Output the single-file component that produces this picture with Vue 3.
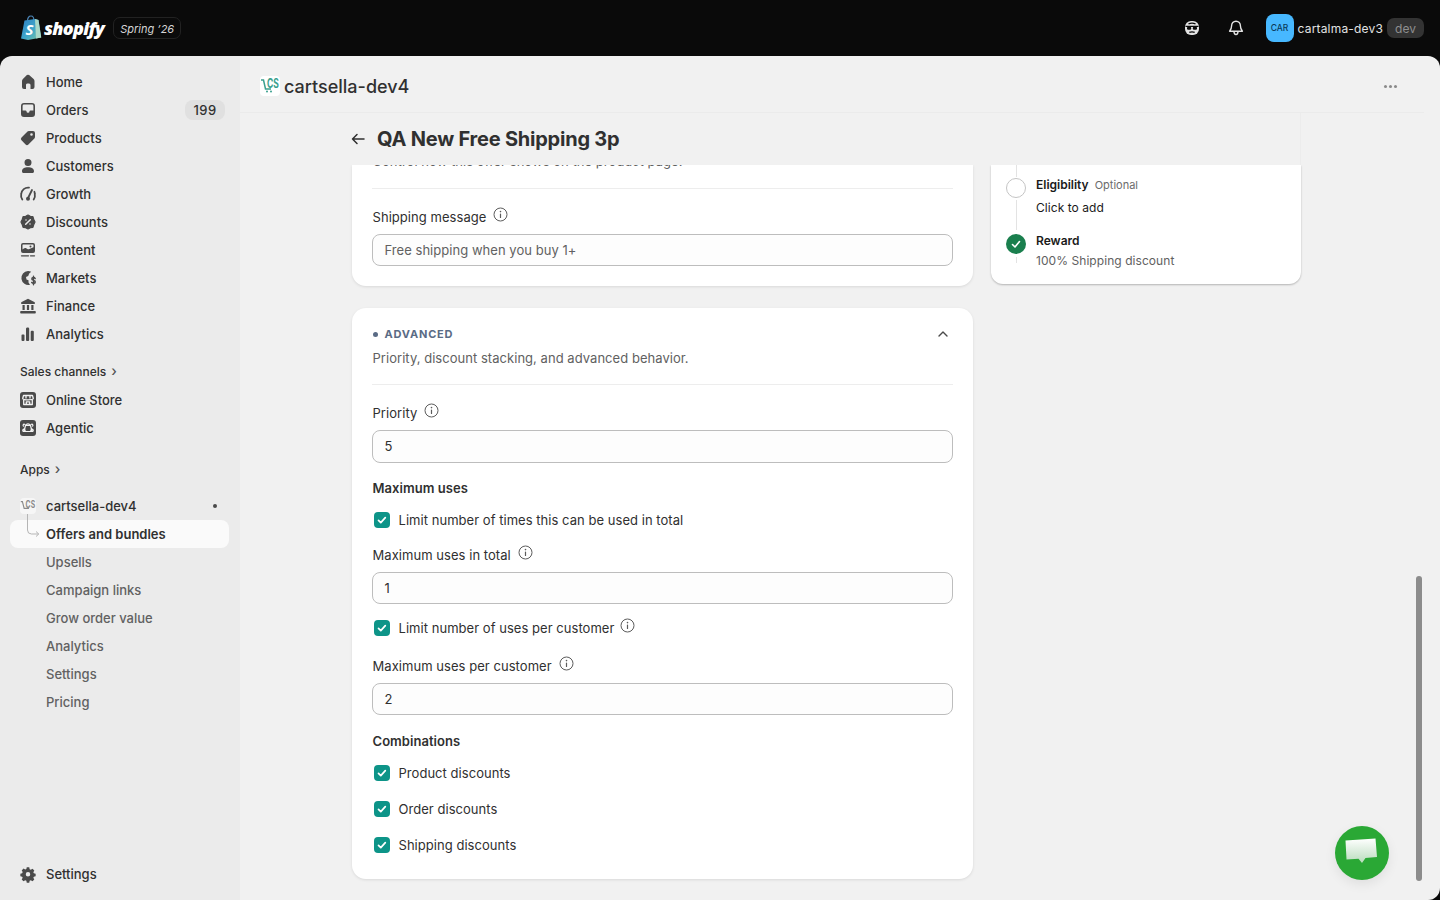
<template>
  <div class="shell">
    <!-- top bar -->
    <header class="topbar">
      <div class="brand">
        <svg class="bag" width="22" height="26" viewBox="0 0 22 26">
          <defs>
            <linearGradient id="bagfill" x1="0" y1="0" x2="1" y2="1">
              <stop offset="0" stop-color="#2f7fc4" />
              <stop offset="0.55" stop-color="#3fa7c9" />
              <stop offset="1" stop-color="#86c9a0" />
            </linearGradient>
          </defs>
          <path d="M7.5 6c0-3 1.5-5 3.5-5s3 2 3 5" fill="none" stroke="#4d86b8" stroke-width="1.2" />
          <path d="M4.5 5.6 15 4l3.5 1 2.7 17.5L8 25 1 23.4z" fill="url(#bagfill)" />
          <path d="M15 4l3.5 1 2.7 17.5-5.2 1.1z" fill="#a9d8c8" />
          <text x="5.5" y="20" class="bag-s">S</text>
        </svg>
        <span class="wordmark">shopify</span>
        <span class="season">Spring ’26</span>
      </div>
      <div class="top-actions">
        <svg class="top-icon" width="20" height="20" viewBox="0 0 20 20">
          <rect x="3" y="3" width="14" height="14" rx="6" fill="#e3e3e3" />
          <path d="M3.500 8.300h13M6.500 5.900c2.300-1 4.700-1 7 0" stroke="#0a0a0a" stroke-width="1.200" fill="none" />
          <rect x="5" y="8.800" width="4.200" height="3" rx="1.200" fill="#0a0a0a" />
          <rect x="10.800" y="8.800" width="4.200" height="3" rx="1.200" fill="#0a0a0a" />
          <path d="M7.300 14.400c1.800-.8 3.600-.8 5.400 0" stroke="#0a0a0a" stroke-width="1.200" fill="none" />
        </svg>
        <svg class="top-icon bell" width="20" height="20" viewBox="0 0 20 20" fill="none" stroke="#e3e3e3" stroke-width="1.4" stroke-linejoin="round">
          <path d="M10 3.2c-2.7 0-4.400 2-4.400 4.500 0 2.600-.5 3.700-2 5.500h12.800c-1.500-1.800-2-2.900-2-5.500 0-2.500-1.700-4.500-4.400-4.500z" />
          <path d="M8 13.500c0 2 .8 3 2 3s2-1 2-3" />
        </svg>
        <div class="store">
          <span class="avatar">CAR</span>
          <span class="store-name">cartalma-dev3</span>
          <span class="dev-pill">dev</span>
        </div>
      </div>
    </header>

    <div class="body">
      <!-- sidebar -->
      <aside class="sidebar">
        <nav class="nav-group">
          <a v-for="item in mainNav" :key="item.label" class="nav-row">
            <svg class="nav-icon" width="20" height="20" viewBox="0 0 20 20">
              <path v-for="(p, i) in icons[item.icon]" :key="i" v-bind="p" />
            </svg>
            <span class="nav-label">{{ item.label }}</span>
            <span v-if="item.badge" class="nav-badge">{{ item.badge }}</span>
          </a>
        </nav>

        <div class="nav-heading first">Sales channels <span class="chev">›</span></div>
        <nav class="nav-group">
          <a v-for="item in channels" :key="item.label" class="nav-row">
            <svg class="nav-icon" width="20" height="20" viewBox="0 0 20 20">
              <path v-for="(p, i) in icons[item.icon]" :key="i" v-bind="p" />
            </svg>
            <span class="nav-label">{{ item.label }}</span>
          </a>
        </nav>

        <div class="nav-heading second">Apps <span class="chev">›</span></div>
        <nav class="nav-group apps">
          <a class="nav-row">
            <span class="mini-app">
              <svg width="16" height="16" viewBox="0 0 20 20" fill="none" stroke="#8a8a8a" stroke-width="1.4">
                <path d="M1 4.500h2l2.200 8.500h6" />
                <text transform="translate(7 12.500) scale(.85 1.25)" class="mini-cs">CS</text>
              </svg>
            </span>
            <span class="nav-label">cartsella-dev4</span>
            <span class="pin-dot"></span>
          </a>
          <a class="nav-row active">
            <svg class="elbow" width="16" height="26" viewBox="0 0 16 26" fill="none" stroke="#b5b5b5" stroke-width="1">
              <path d="M1.500 0v16a4 4 0 0 0 4 4h7M10 17.500l2.800 2.500-2.800 2.500" />
            </svg>
            <span class="nav-label">Offers and bundles</span>
          </a>
          <a v-for="label in appLinks" :key="label" class="nav-row sub">
            <span class="nav-label">{{ label }}</span>
          </a>
        </nav>

        <a class="nav-row settings">
          <svg class="nav-icon" width="20" height="20" viewBox="0 0 20 20">
            <path v-for="(p, i) in icons.gear" :key="i" v-bind="p" />
          </svg>
          <span class="nav-label">Settings</span>
        </a>
      </aside>

      <!-- main area -->
      <main class="main">
        <div class="app-header">
          <span class="app-logo">
            <svg width="20" height="20" viewBox="0 0 20 20" fill="none" stroke="#3aa08e" stroke-width="1.500">
              <path d="M1 4h2.500l2 9h5.500" />
              <circle cx="7" cy="15.500" r="1" fill="#3aa08e" stroke="none" />
              <circle cx="11" cy="15.500" r="1" fill="#3aa08e" stroke="none" />
              <text transform="translate(7 12) scale(.85 1.25)" class="logo-cs">CS</text>
            </svg>
          </span>
          <span class="app-title">cartsella-dev4</span>
          <span class="dots"><i></i><i></i><i></i></span>
        </div>

        <div class="page-head">
          <svg width="16" height="16" viewBox="0 0 16 16" fill="none" stroke="#303030" stroke-width="1.500" stroke-linecap="round" stroke-linejoin="round">
            <path d="M14 8H2.500M7 3.500 2.500 8 7 12.500" />
          </svg>
          <h1 class="page-title">QA New Free Shipping 3p</h1>
        </div>

        <div class="content">
          <div class="col-main">
            <section class="card clipped">
              <p class="section-desc hint">Control how this offer shows on the product page.</p>
              <div class="divider top-one"></div>
              <label class="field-label">Shipping message <InfoMark /></label>
              <div class="input placeholder">Free shipping when you buy 1+</div>
            </section>

            <section class="card advanced">
              <div class="section-head">
                <span class="eyebrow"><i class="eyebrow-dot"></i>ADVANCED</span>
                <svg width="12" height="12" viewBox="0 0 12 12" fill="none" stroke="#4a4a4a" stroke-width="1.400" stroke-linecap="round" stroke-linejoin="round">
                  <path d="M2 8l4-4 4 4" />
                </svg>
              </div>
              <p class="section-desc">Priority, discount stacking, and advanced behavior.</p>
              <div class="divider"></div>

              <label class="field-label">Priority <InfoMark /></label>
              <div class="input tall">5</div>

              <h3 class="group-title">Maximum uses</h3>
              <div class="check-row first-check">
                <CheckBox />
                <span>Limit number of times this can be used in total</span>
              </div>
              <label class="field-label after-check">Maximum uses in total <InfoMark /></label>
              <div class="input">1</div>
              <div class="check-row after-input">
                <CheckBox />
                <span>Limit number of uses per customer</span>
                <InfoMark />
              </div>
              <label class="field-label after-check two">Maximum uses per customer <InfoMark /></label>
              <div class="input">2</div>

              <h3 class="group-title combos">Combinations</h3>
              <div v-for="label in combos" :key="label" class="check-row combo">
                <CheckBox />
                <span>{{ label }}</span>
              </div>
            </section>
          </div>

          <div class="col-side">
            <section class="summary">
              <div class="step eligibility">
                <span class="step-mark open"></span>
                <div>
                  <div class="step-title">Eligibility <span class="optional">Optional</span></div>
                  <div class="step-text dark">Click to add</div>
                </div>
              </div>
              <div class="step reward">
                <span class="step-mark done">
                  <svg width="12" height="12" viewBox="0 0 12 12" fill="none" stroke="#fff" stroke-width="1.600" stroke-linecap="round" stroke-linejoin="round">
                    <path d="M2.500 6.500l2.500 2.500 4.500-5.500" />
                  </svg>
                </span>
                <div>
                  <div class="step-title">Reward</div>
                  <div class="step-text">100% Shipping discount</div>
                </div>
              </div>
            </section>
          </div>
        </div>

        <div class="scroll-thumb"></div>
        <button class="chat">
          <svg width="46" height="36" viewBox="0 0 46 36">
            <defs>
              <linearGradient id="chatfill" x1="0" y1="0" x2="0" y2="1">
                <stop offset="0" stop-color="#ffffff" />
                <stop offset="1" stop-color="#b9dcbc" />
              </linearGradient>
            </defs>
            <path d="M6.500 5.500 36.500 3.500 38 22 26.500 23 23 28 19.500 23.700 7.500 24.500z" fill="url(#chatfill)" />
          </svg>
        </button>
      </main>
    </div>
  </div>
</template>

<script setup>
import { h } from "vue";

const InfoMark = () =>
  h("svg", { class: "info", width: 15, height: 15, viewBox: "0 0 15 15", fill: "none", stroke: "#5c5c5c", "stroke-width": 1 }, [
    h("circle", { cx: 7.5, cy: 7.5, r: 6.5 }),
    h("path", { d: "M7.500 7v3.500", "stroke-width": 1.2, "stroke-linecap": "round" }),
    h("circle", { cx: 7.5, cy: 4.6, r: 0.8, fill: "#5c5c5c", stroke: "none" }),
  ]);

const CheckBox = () =>
  h("span", { class: "box" }, [
    h("svg", { width: 16, height: 16, viewBox: "0 0 16 16", fill: "none", stroke: "#fff", "stroke-width": 1.7, "stroke-linecap": "round", "stroke-linejoin": "round" }, [
      h("path", { d: "M4.500 8.300l2.300 2.300 4.500-5" }),
    ]),
  ]);

const ink = "#4a4a4a";
const icons = {
  home: [{ fill: ink, d: "M8.900 3.100a1.700 1.700 0 0 1 2.200 0l4.500 3.800c.6.500.9 1.200.9 2V15a2 2 0 0 1-2 2h-2v-4a1.500 1.500 0 0 0-1.500-1.500h-1A1.500 1.500 0 0 0 8 13v4H6a2 2 0 0 1-2-2V8.900c0-.8.300-1.500.9-2z" }],
  orders: [{ fill: ink, "fill-rule": "evenodd", d: "M6 3h8a3 3 0 0 1 3 3v8a3 3 0 0 1-3 3H6a3 3 0 0 1-3-3V6a3 3 0 0 1 3-3zM4.600 10.500V6A1.400 1.400 0 0 1 6 4.600h8A1.400 1.400 0 0 1 15.400 6v4.500h-2.900a1 1 0 0 0-1 .8 1.500 1.500 0 0 1-3 0 1 1 0 0 0-1-.8z" }],
  tag: [{ fill: ink, "fill-rule": "evenodd", d: "M3.500 9.500l6-6A2 2 0 0 1 10.900 3H15a2 2 0 0 1 2 2v4.100a2 2 0 0 1-.6 1.400l-6 6a2 2 0 0 1-2.800 0l-4.100-4.200a2 2 0 0 1 0-2.800zM13.500 5.200a1.300 1.300 0 1 0 0 2.600 1.300 1.300 0 0 0 0-2.600z" }],
  person: [{ fill: ink, d: "M10 3a3.500 3.500 0 1 1 0 7 3.500 3.500 0 0 1 0-7zM4 15.200c0-2.400 2.500-3.900 6-3.900s6 1.500 6 3.900c0 1-.7 1.800-1.500 1.800h-9C4.700 17 4 16.200 4 15.200z" }],
  growth: [
    { fill: "none", stroke: ink, "stroke-width": 1.8, "stroke-linecap": "round", d: "M4.300 15.500A7 7 0 0 1 3.200 10 7 7 0 0 1 11 3.600M15.700 15.500A7 7 0 0 0 16.800 10c0-.8-.1-1.500-.4-2.200" },
    { fill: "none", stroke: ink, "stroke-width": 1.800, "stroke-linecap": "round", d: "M9.800 14.500 14 6" },
    { fill: ink, d: "M10 12.800a2 2 0 1 1 0 4 2 2 0 0 1 0-4z" },
  ],
  discount: [
    { fill: ink, stroke: ink, "stroke-width": 1.2, "stroke-linejoin": "round", d: "M10 3l2.300 1.300 2.600.3.800 2.600L17 10l-1.300 2.800-.8 2.600-2.600.3L10 17l-2.300-1.300-2.600-.3-.8-2.600L3 10l1.300-2.800.8-2.600 2.600-.3z" },
    { fill: "none", stroke: "#ebebeb", "stroke-width": 1.500, "stroke-linecap": "round", d: "M12.300 7.700l-4.600 4.600M8 8h.01M12 12h.01" },
  ],
  content: [
    { fill: ink, "fill-rule": "evenodd", d: "M5 3h10a2 2 0 0 1 2 2v6a2 2 0 0 1-2 2H5a2 2 0 0 1-2-2V5a2 2 0 0 1 2-2zM4.500 9.500c1.300-1.500 2.600-2 3.800-1.200 1 .7 1.500 1.200 2.500 1l4.700-2V5a.5.5 0 0 0-.5-.5H5a.5.5 0 0 0-.5.5z" },
    { fill: ink, d: "M12.500 5.500a1 1 0 1 1 0 2 1 1 0 0 1 0-2z" },
    { fill: "none", stroke: ink, "stroke-width": 1.300, "stroke-linecap": "round", d: "M3.500 15.800h7M12.500 15.800h4" },
  ],
  markets: [
    { fill: ink, "fill-rule": "evenodd", d: "M10 3a7 7 0 0 1 3.200.8l-2 1.800-1 2.400-2.200 1 .5 2.500 2 .8v2.200l1.500 2.300A7 7 0 1 1 10 3z" },
    { fill: "none", stroke: ink, "stroke-width": 1.400, "stroke-linecap": "round", d: "M17.200 10.500c-.4-.8-1-1-1.700-1-1 0-1.700.5-1.700 1.400 0 2 3.500 1 3.500 3 0 1-.8 1.500-1.800 1.500-.8 0-1.400-.3-1.800-1M15.500 8.200v8.500" },
  ],
  finance: [
    { fill: ink, d: "M10 2.800l6.800 3.400v1.800H3.200V6.200zM3 15h14a.8.8 0 0 1 .8.800v.9a.8.8 0 0 1-.8.800H3a.8.8 0 0 1-.8-.8v-.9A.8.8 0 0 1 3 15zM4.500 9h2.200v5H4.500zM8.900 9h2.200v5H8.900zM13.300 9h2.200v5h-2.200z" },
  ],
  analytics: [
    { fill: ink, d: "M4.300 10.500h1.400a.8.8 0 0 1 .8.800V16a1 1 0 0 1-1 1h-1a1 1 0 0 1-1-1v-4.700a.8.8 0 0 1 .8-.8zM9 3.500h1a1.200 1.200 0 0 1 1.200 1.200V16a1 1 0 0 1-1 1H9a1 1 0 0 1-1-1V4.700A1.200 1.200 0 0 1 9 3.500zM13.700 6.800h1.100a1 1 0 0 1 1 1V16a1 1 0 0 1-1 1h-1.100a1 1 0 0 1-1-1V7.800a1 1 0 0 1 1-1z" },
  ],
  store: [
    { fill: ink, d: "M5 2h10a3 3 0 0 1 3 3v10a3 3 0 0 1-3 3H5a3 3 0 0 1-3-3V5a3 3 0 0 1 3-3z" },
    { fill: "none", stroke: "#f2f2f2", "stroke-width": 1.300, "stroke-linejoin": "round", d: "M5.500 5.500h9l.8 3c0 1-3 1.300-5.300 1.300s-5.300-.3-5.300-1.300zM5.700 10v4.500h8.600V10M8.300 14.500v-2.700h3.400v2.700M8 5.500v3M12 5.500v3" },
  ],
  agentic: [
    { fill: ink, d: "M5 2h10a3 3 0 0 1 3 3v10a3 3 0 0 1-3 3H5a3 3 0 0 1-3-3V5a3 3 0 0 1 3-3z" },
    { fill: "none", stroke: "#f2f2f2", "stroke-width": 1.200, "stroke-linejoin": "round", d: "M7.500 7.500h5l1.500 6H6zM8.300 7.500a1.700 1.700 0 1 1 3.400 0M6 13.500a1.200 1.200 0 1 0-.1 0M14 13.500a1.200 1.200 0 1 1 .1 0M7.500 7.500a1.200 1.200 0 1 0-1.700 1M12.500 7.500a1.200 1.200 0 1 1 1.700 1" },
  ],
  gear: [
    { fill: ink, "fill-rule": "evenodd", d: "M8.600 2.500h2.800l.4 2.100 1.300.6 1.900-1.100 2 2-1.100 1.900.6 1.300 2 .4v2.800l-2 .5-.6 1.300 1.100 1.800-2 2-1.900-1.100-1.300.6-.4 2H8.600l-.4-2-1.300-.6-1.900 1.100-2-2 1.100-1.800-.6-1.300-2-.5V9.600l2-.4.6-1.300L3 6l2-2 1.900 1.100 1.300-.6zM10 7.700a2.500 2.500 0 1 0 0 5 2.500 2.500 0 0 0 0-5z", transform: "translate(1 1) scale(.9)" },
  ],
};

const mainNav = [
  { label: "Home", icon: "home" },
  { label: "Orders", icon: "orders", badge: "199" },
  { label: "Products", icon: "tag" },
  { label: "Customers", icon: "person" },
  { label: "Growth", icon: "growth" },
  { label: "Discounts", icon: "discount" },
  { label: "Content", icon: "content" },
  { label: "Markets", icon: "markets" },
  { label: "Finance", icon: "finance" },
  { label: "Analytics", icon: "analytics" },
];

const channels = [
  { label: "Online Store", icon: "store" },
  { label: "Agentic", icon: "agentic" },
];

const appLinks = ["Upsells", "Campaign links", "Grow order value", "Analytics", "Settings", "Pricing"];
const combos = ["Product discounts", "Order discounts", "Shipping discounts"];
</script>

<style>
html,
body {
  margin: 0;
  height: 100%;
  background: #0a0a0a;
  overflow: hidden;
}
.info {
  flex: none;
  position: relative;
  top: -3px;
}
.check-row .info {
  top: -3px;
  margin-left: 6px;
}
.box {
  width: 16px;
  height: 16px;
  flex: none;
  border-radius: 4px;
  background: #0d9488;
  display: flex;
}
</style>

<style scoped>
.shell {
  width: 1440px;
  height: 900px;
  display: flex;
  flex-direction: column;
  font-family: Inter, "Liberation Sans", sans-serif;
  color: #303030;
  background: #0a0a0a;
}

/* top bar */
.topbar {
  height: 56px;
  flex: none;
  display: flex;
  align-items: center;
  justify-content: space-between;
  padding: 0 16px 0 20px;
}
.brand {
  display: flex;
  align-items: center;
}
.bag-s {
  font: italic 700 15px "Open Sans", sans-serif;
  fill: #fff;
}
.wordmark {
  margin-left: 2px;
  font: italic 800 18px "Open Sans", sans-serif;
  letter-spacing: -0.7px;
  color: #fff;
}
.season {
  margin-left: 9px;
  height: 19px;
  padding: 1px 6px 0;
  box-sizing: content-box;
  display: flex;
  align-items: center;
  border: 1px solid #222;
  border-radius: 7px;
  font-size: 11px;
  font-style: italic;
  color: #d4d4d4;
}
.top-actions {
  display: flex;
  align-items: center;
}
.bell {
  margin-left: 24px;
}
.store {
  margin-left: 20px;
  display: flex;
  align-items: center;
}
.avatar {
  width: 28px;
  height: 28px;
  border-radius: 8px;
  background: #47b8ff;
  color: #0b3a5a;
  font-size: 8.500px;
  font-weight: 500;
  display: flex;
  align-items: center;
  justify-content: center;
}
.store-name {
  margin-left: 4px;
  font-size: 12px;
  letter-spacing: 0.18px;
  color: #e3e3e3;
}
.dev-pill {
  margin-left: 4px;
  height: 20px;
  width: 37px;
  display: flex;
  align-items: center;
  justify-content: center;
  border-radius: 7px;
  background: #333;
  color: #8f8f8f;
  font-size: 12px;
}

/* sidebar */
.body {
  flex: 1;
  display: flex;
  min-height: 0;
}
.sidebar {
  width: 240px;
  flex: none;
  box-sizing: border-box;
  padding: 12px 11px 12px 10px;
  display: flex;
  flex-direction: column;
  background: #ebebeb;
  border-top-left-radius: 12px;
}
.nav-group {
  display: flex;
  flex-direction: column;
}
.nav-row {
  position: relative;
  height: 28px;
  flex: none;
  display: flex;
  align-items: center;
  padding: 0 4px 0 10px;
  border-radius: 8px;
  box-sizing: border-box;
}
.nav-icon {
  margin-right: 6px;
  transform: translateX(-2px);
  flex: none;
  width: 20px;
}
.nav-label {
  font-size: 13px;
  line-height: 16px;
  font-weight: 500;
  color: #303030;
}
.nav-badge {
  margin-left: auto;
  height: 20px;
  min-width: 40px;
  display: flex;
  align-items: center;
  justify-content: center;
  border-radius: 8px;
  background: #e0e0e0;
  font-size: 13px;
  font-weight: 550;
  letter-spacing: 0.4px;
}
.nav-heading {
  padding-left: 10px;
  height: 20px;
  display: flex;
  align-items: center;
  gap: 5px;
  font-size: 12px;
  font-weight: 500;
  color: #303030;
}
.nav-heading.first {
  margin-top: 13px;
  margin-bottom: 5px;
}
.nav-heading.second {
  margin-top: 17px;
  margin-bottom: 13px;
}
.chev {
  font-size: 14px;
  color: #555;
  line-height: 1;
}
.mini-app {
  width: 16px;
  height: 16px;
  margin-right: 10px;
  padding: 0;
  background: #f6f6f6;
  border-radius: 4px;
  display: flex;
}
.mini-cs {
  font: 700 10px Inter, sans-serif;
  fill: #8a8a8a;
  stroke: none;
}
.pin-dot {
  margin-left: auto;
  margin-right: 8px;
  width: 4px;
  height: 4px;
  border-radius: 50%;
  background: #4a4a4a;
}
.nav-row.active {
  background: #fafafa;
  padding-left: 36px;
  margin-right: 0;
}
.nav-row.active .nav-label {
  font-weight: 600;
}
.elbow {
  position: absolute;
  left: 16px;
  top: -6px;
}
.nav-row.sub {
  padding-left: 36px;
}
.nav-row.sub .nav-label {
  font-weight: 450;
  color: #616161;
}
.settings {
  margin-top: auto;
}

/* main */
.main {
  position: relative;
  flex: 1;
  min-width: 0;
  display: flex;
  flex-direction: column;
  background: #f1f1f1;
  border-top-right-radius: 12px;
  border-bottom-right-radius: 12px;
  overflow: hidden;
}
.app-header {
  height: 57px;
  flex: none;
  box-sizing: border-box;
  display: flex;
  align-items: center;
  margin-right: 16px;
  padding: 4px 27px 0 20px;
  border-bottom: 1px solid #ebebeb;
}
.app-logo {
  width: 20px;
  height: 20px;
  background: #fff;
  border-radius: 4px;
  display: flex;
}
.logo-cs {
  font: 700 10px Inter, sans-serif;
  fill: #3aa08e;
  stroke: none;
}
.app-title {
  margin-left: 4px;
  font-size: 18px;
  font-weight: 550;
  color: #303030;
}
.dots {
  margin-left: auto;
  display: flex;
  gap: 2px;
}
.dots i {
  width: 3px;
  height: 3px;
  border-radius: 50%;
  background: #8a8a8a;
}
.page-head {
  height: 52px;
  width: 1061px;
  flex: none;
  box-sizing: border-box;
  display: flex;
  align-items: center;
  padding: 0 0 0 110px;
  gap: 11px;
  border-right: 1px solid #ececec;
}
.page-title {
  margin: 0;
  font-size: 20px;
  font-weight: 650;
  color: #303030;
  letter-spacing: -0.22px;
}
.content {
  flex: 1;
  min-height: 0;
  overflow: hidden;
  display: flex;
  align-items: flex-start;
  gap: 18px;
  padding-left: 112px;
}
.col-main {
  width: 621px;
  flex: none;
  display: flex;
  flex-direction: column;
  gap: 22px;
}
.col-side {
  width: 310px;
  flex: none;
}
.card {
  background: #fff;
  padding: 0 20px;
  border-radius: 14px;
  box-shadow: 0 1px 3px rgba(0, 0, 0, 0.1);
}
.clipped {
  height: 121px;
  box-sizing: border-box;
  border-radius: 0 0 14px 14px;
}
.advanced {
  height: 571px;
  box-sizing: border-box;
  padding-top: 16px;
}
.section-desc {
  margin: 0 0 0 0.5px;
  font-size: 13px;
  line-height: 20px;
  color: #616161;
  letter-spacing: 0.04px;
}
.hint {
  margin-top: -14px;
}
.section-head {
  height: 20px;
  display: flex;
  align-items: center;
  justify-content: space-between;
  padding-right: 4px;
}
.eyebrow {
  display: flex;
  align-items: center;
  margin-left: 0.5px;
  font-size: 11px;
  font-weight: 650;
  letter-spacing: 0.8px;
  color: #5a6b85;
}
.eyebrow-dot {
  width: 5px;
  height: 5px;
  border-radius: 50%;
  background: #5a6b85;
  margin-right: 7px;
}
.advanced .section-desc {
  margin-top: 4px;
}
.divider {
  height: 1px;
  margin: 16px 0 18px;
  background: #ededed;
}
.divider.top-one {
  margin: 17px 0 18px;
}
.field-label {
  display: flex;
  align-items: center;
  height: 20px;
  gap: 7px;
  padding-left: 0.5px;
  font-size: 13px;
  color: #303030;
  letter-spacing: 0.05px;
}
.input {
  height: 32px;
  margin-top: 7px;
  box-sizing: border-box;
  display: flex;
  align-items: center;
  padding: 0 11.5px;
  border: 1px solid #bdbdbd;
  border-radius: 8px;
  background: #fdfdfd;
  font-size: 13px;
  color: #303030;
  letter-spacing: 0.04px;
}
.input.tall {
  height: 33px;
  padding-bottom: 1px;
}
.input.placeholder {
  color: #616161;
}
.group-title {
  margin: 15px 0 0;
  padding-left: 0.5px;
  height: 20px;
  font-size: 13px;
  line-height: 20px;
  font-weight: 600;
  color: #303030;
  letter-spacing: 0.05px;
}
.group-title.combos {
  margin-top: 16px;
}
.check-row {
  display: flex;
  align-items: center;
  height: 20px;
  font-size: 13px;
  color: #303030;
  letter-spacing: 0.04px;
  padding-left: 1.5px;
}
.check-row > span:nth-child(2) {
  margin-left: 9px;
}
.first-check {
  margin-top: 12px;
}
.after-check {
  margin-top: 15px;
  margin-bottom: 0;
}
.after-check.two {
  margin-top: 18px;
}
.after-input {
  margin-top: 14px;
}
.combo {
  margin-top: 16px;
}
.combos + .combo {
  margin-top: 12px;
}

/* summary card */
.summary {
  height: 119px;
  box-sizing: border-box;
  background: #fff;
  border-radius: 0 0 12px 12px;
  box-shadow: 0 1px 2px rgba(0, 0, 0, 0.25);
  padding: 0 0 0 15px;
  position: relative;
}
.step {
  position: relative;
  display: flex;
  gap: 10px;
}
.eligibility {
  padding-top: 11px;
}
.reward {
  padding-top: 15px;
}
.eligibility::before,
.eligibility::after {
  content: "";
  position: absolute;
  left: 9.500px;
  width: 1px;
  background: #e3e3e3;
}
.eligibility::before {
  top: 0;
  height: 12px;
}
.eligibility::after {
  top: 35px;
  height: 30px;
}
.reward::after {
  content: "";
  position: absolute;
  left: 9.500px;
  top: 40px;
  height: 6px;
  width: 1px;
  background: #e3e3e3;
}
.step-mark {
  width: 20px;
  height: 20px;
  flex: none;
  margin-top: 2px;
  box-sizing: border-box;
  border-radius: 50%;
  display: flex;
  align-items: center;
  justify-content: center;
}
.step-mark.open {
  border: 1px solid #c4c4c4;
  background: #fff;
}
.step-mark.done {
  background: #1a7f4e;
}
.step-title {
  font-size: 12px;
  font-weight: 600;
  line-height: 18px;
  color: #1a1a1a;
}
.optional {
  margin-left: 3px;
  font-size: 11px;
  font-weight: 400;
  color: #6b6b6b;
}
.step-text {
  margin-top: 2px;
  font-size: 12px;
  line-height: 18px;
  color: #616161;
  letter-spacing: 0.06px;
}
.step-text.dark {
  margin-top: 5px;
  color: #1a1a1a;
}

/* overlays */
.scroll-thumb {
  position: absolute;
  left: 1176px;
  top: 520px;
  width: 6px;
  height: 305px;
  border-radius: 3px;
  background: #8c8c8c;
}
.chat {
  position: absolute;
  left: 1095px;
  top: 770px;
  width: 54px;
  height: 54px;
  padding: 0;
  border: 0;
  border-radius: 50%;
  background: #2aa835;
  display: flex;
  align-items: center;
  justify-content: center;
  box-shadow: 0 4px 12px rgba(0, 0, 0, 0.08);
}
</style>
